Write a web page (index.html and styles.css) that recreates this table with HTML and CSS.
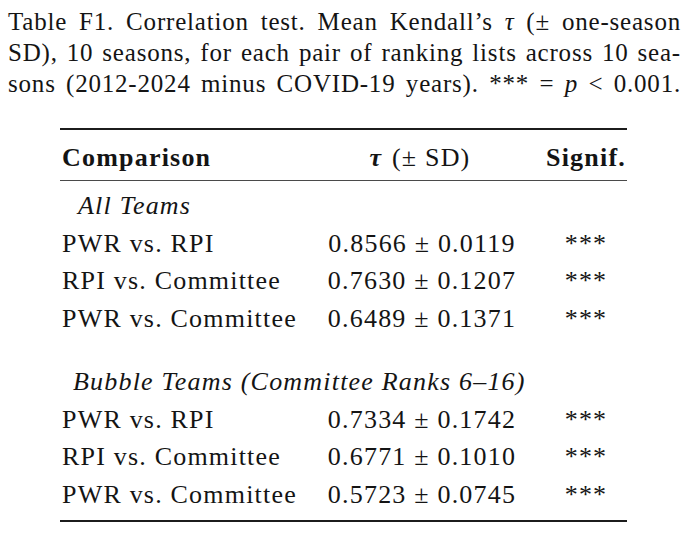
FILE: index.html
```html
<!DOCTYPE html>
<html>
<head>
<meta charset="utf-8">
<link rel="stylesheet" href="styles.css">
</head>
<body>
<div class="page">
  <p class="caption">
    <span class="line">Table F1. Correlation test. Mean Kendall’s <i class="math">τ</i> (± one-season</span>
    <span class="line">SD), 10 seasons, for each pair of ranking lists across 10 sea-</span>
    <span class="line">sons (2012-2024 minus COVID-19 years). *** = <i class="math">p</i> &lt; 0.001.</span>
  </p>
  <div class="tbl">
    <div class="row head">
      <div class="cell name">Comparison</div>
      <div class="cell mid"><b class="tau">τ</b> <span class="plain">(± SD)</span></div>
      <div class="cell sig">Signif.</div>
    </div>
    <div class="group first"><i>All Teams</i></div>
    <div class="row"><div class="cell name">PWR vs. RPI</div><div class="cell mid">0.8566 ± 0.0119</div><div class="cell sig">***</div></div>
    <div class="row"><div class="cell name">RPI vs. Committee</div><div class="cell mid">0.7630 ± 0.1207</div><div class="cell sig">***</div></div>
    <div class="row"><div class="cell name">PWR vs. Committee</div><div class="cell mid">0.6489 ± 0.1371</div><div class="cell sig">***</div></div>
    <div class="group second"><i>Bubble Teams (Committee Ranks 6–16)</i></div>
    <div class="row"><div class="cell name">PWR vs. RPI</div><div class="cell mid">0.7334 ± 0.1742</div><div class="cell sig">***</div></div>
    <div class="row"><div class="cell name">RPI vs. Committee</div><div class="cell mid">0.6771 ± 0.1010</div><div class="cell sig">***</div></div>
    <div class="row last"><div class="cell name">PWR vs. Committee</div><div class="cell mid">0.5723 ± 0.0745</div><div class="cell sig">***</div></div>
  </div>
</div>
</body>
</html>
```
FILE: styles.css
```css
html, body {
  margin: 0;
  padding: 0;
  background: #ffffff;
}
body {
  font-family: "Liberation Serif", "Times New Roman", serif;
  color: #141414;
}
.page {
  padding: 6px 12px 0 8px;
}
.caption {
  margin: 0;
  width: 673px;
  font-size: 25px;
  line-height: 31px;
  letter-spacing: 0.8px;
}
.caption .line {
  display: block;
  text-align: justify;
  text-align-last: justify;
  white-space: nowrap;
}
.math {
  font-style: italic;
}
.tbl {
  margin: 29px 0 0 52px;
  width: 567px;
  border-top: 2px solid #1c1c1c;
  border-bottom: 2px solid #1c1c1c;
  padding-bottom: 7px;
  font-size: 26px;
  letter-spacing: 1.2px;
}
.row {
  display: grid;
  grid-template-columns: 256px 212px 99px;
  height: 37.5px;
  line-height: 37.5px;
}
.cell {
  white-space: nowrap;
}
.name {
  padding-left: 2px;
}
.mid {
  text-align: center;
}
.sig {
  text-align: center;
  padding-left: 17px;
}
.head {
  height: 51px;
  line-height: 51px;
  font-weight: bold;
  border-bottom: 1px solid #4a4a4a;
  box-sizing: border-box;
}
.head .cell {
  padding-top: 2px;
}
.head .mid {
  font-weight: normal;
  padding-right: 4px;
}
.tau {
  font-style: italic;
  font-weight: bold;
  margin-right: 2px;
}
.group {
  height: 37.5px;
  line-height: 37.5px;
  white-space: nowrap;
}
.group.first {
  padding-top: 6px;
  padding-left: 18px;
}
.group.second {
  padding-top: 26px;
  padding-left: 13px;
}
```
